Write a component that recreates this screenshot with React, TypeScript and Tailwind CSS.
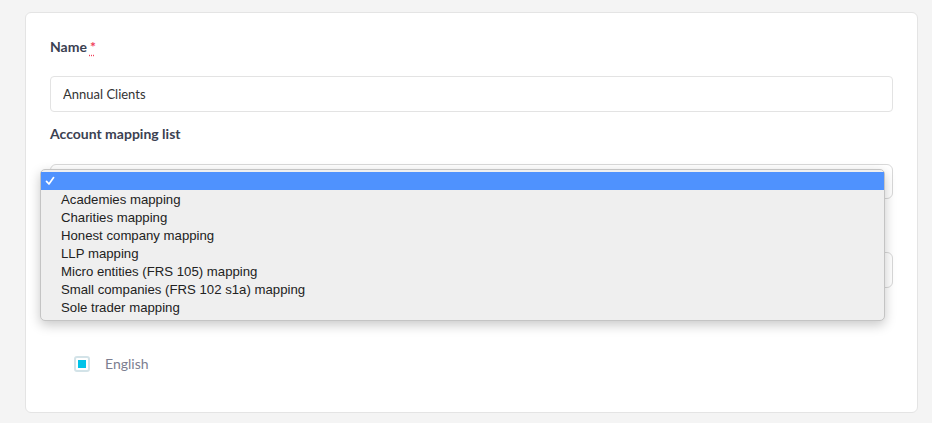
import { useState } from "react";

const MAPPINGS = [
  "Academies mapping",
  "Charities mapping",
  "Honest company mapping",
  "LLP mapping",
  "Micro entities (FRS 105) mapping",
  "Small companies (FRS 102 s1a) mapping",
  "Sole trader mapping",
];

export default function App() {
  const [name, setName] = useState("Annual Clients");

  return (
    <div className="min-h-[423px] bg-[#f4f4f4] pt-3 pl-[25px] pr-[14px] font-['Lato','Noto_Sans',sans-serif]">
      <div className="rounded-md border border-[#e4e4e4] bg-white pt-6 pl-6 pr-6 pb-[38px]">
        {/* Name */}
        <label className="flex h-5 items-center text-sm font-bold text-[#3b4151]">
          Name
          <abbr
            className="ml-[3px] self-start text-[#f0405a] [text-decoration-line:underline] decoration-dotted decoration-[#f0405a] underline-offset-[3px]"
            title="required"
          >
            *
          </abbr>
        </label>
        <input
          value={name}
          onChange={(e) => setName(e.target.value)}
          className="mt-[19px] block h-9 w-full rounded border border-[#e3e3e3] bg-white px-3 text-[13px] text-[#333] outline-none"
        />

        {/* Account mapping list */}
        <label className="mt-3 flex h-5 items-center text-sm font-bold text-[#3b4151]">
          Account mapping list
        </label>
        <div className="relative mt-5">
          <div className="h-[35px] w-full rounded-md border border-[#d9d9d9] bg-white" />

          {/* Native select popup */}
          <div className="absolute left-[-10px] top-[5px] z-10 w-[845px] rounded-[5px] border border-[#c4c4c4] bg-[#efefef] pt-[2px] pb-[4px] font-['Liberation_Sans','Helvetica',sans-serif] text-[13.2px] text-[#222] shadow-[0_4px_12px_rgba(0,0,0,0.22)]">
            <div className="flex h-[18px] items-center bg-[#4f92fe] pl-[4px] text-white">
              <svg width="10" height="10" viewBox="0 0 10 10" fill="none">
                <path d="M1.5 5.3 L4 8 L8.6 1.6" stroke="white" strokeWidth="1.7" strokeLinecap="round" strokeLinejoin="round" />
              </svg>
            </div>
            {MAPPINGS.map((m) => (
              <div key={m} className="flex h-[18px] items-center pl-[20px] pt-px">
                {m}
              </div>
            ))}
          </div>
        </div>

        {/* Field hidden under the popup */}
        <div className="mt-3 h-5" />
        <div className="mt-[21px] h-9 w-full rounded-md border border-[#d9d9d9] bg-white" />

        {/* Languages */}
        <div className="mt-[66px] flex items-center pl-6">
          <span className="flex h-4 w-4 items-center justify-center rounded-[3px] border-2 border-[#d3e3e8] bg-white">
            <span className="h-2 w-2 bg-[#00c3e8]" />
          </span>
          <span className="ml-[15px] text-sm text-[#7c7e90]">English</span>
        </div>
      </div>
    </div>
  );
}
